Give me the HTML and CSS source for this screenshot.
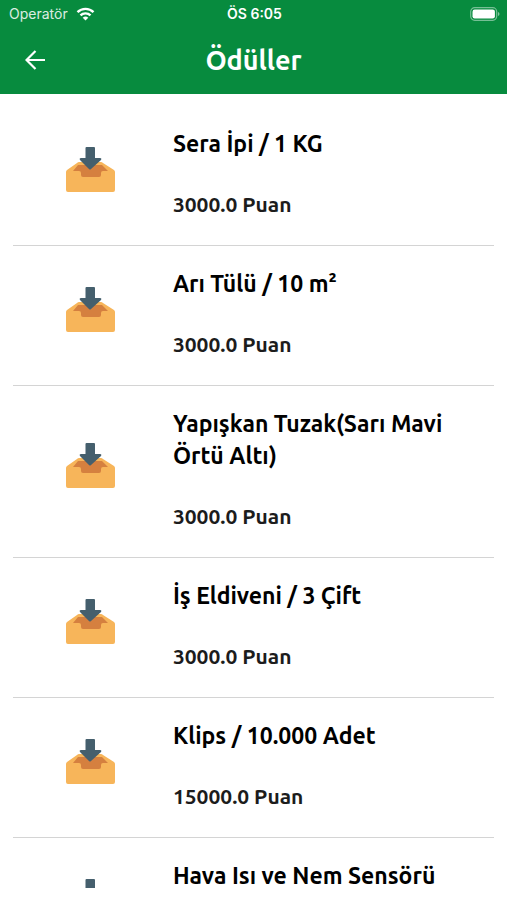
FILE: index.html
```
<!DOCTYPE html>
<html lang="tr">
<head>
  <meta charset="UTF-8" />
  <meta name="viewport" content="width=device-width, initial-scale=1" />
  <title>Ödüller</title>
  <link rel="stylesheet" href="styles.css">
</head>
<body>
  <svg class="sprite" aria-hidden="true">
    <symbol id="inbox" viewBox="0 0 50 46">
      <path d="M12 16q1-1 2-1h22q1 0 2 1l11 7q1 1 1 2v18q0 2-2 2H3q-2 0-2-2V25q0-1 1-2z" fill="#f7b55a" />
      <path d="M13 18h24l6 6h-5q-2 0-2 2v2q0 2-2 2H18q-2 0-2-2v-2q0-2-2-2H8z" fill="#d5803f" />
      <path d="M20.500 1q0-1 1-1h7.500q1 0 1 1v10h5q2 0 1 2L26 22q-1 1-2 0l-9-9q-1-2 1-2h4.500z" fill="#455f6d" />
    </symbol>
  </svg>
  <header class="header">
    <div class="status">
      <div class="carrier">
        <span>Operatör</span>
        <svg class="wifi" viewBox="0 0 18 14" fill="none" stroke="#fff" stroke-width="2.4">
          <path d="M1 5.2a11.4 11.4 0 0 1 16 0" />
          <path d="M4 8.4a7.1 7.1 0 0 1 10 0" />
          <path d="M9 13.6L6.2 10.8a4 4 0 0 1 5.6 0z" fill="#fff" stroke="none" />
        </svg>
      </div>
      <div class="time">ÖS 6:05</div>
      <svg class="battery" viewBox="0 0 30 14">
        <rect x="0.7" y="0.7" width="26" height="12.6" rx="4" fill="none" stroke="#fff" stroke-opacity=".45" stroke-width="1.2" />
        <rect x="2.5" y="2.5" width="22.4" height="9" rx="2.2" fill="#fff" />
        <path d="M28 5q1.5.6 1.5 2T28 9z" fill="#fff" fill-opacity=".5" />
      </svg>
    </div>
    <div class="navbar">
      <button class="back" aria-label="Geri">
        <svg viewBox="0 0 20 20" fill="none" stroke="#fff" stroke-width="2.2">
          <path d="M20 10H2M10.500 1L1.500 10l9 9" />
        </svg>
      </button>
      <h1>Ödüller</h1>
    </div>
  </header>
  <main class="list">
    <article class="reward">
      <div class="icon"><svg><use href="#inbox" /></svg></div>
      <div class="info"><h2>Sera İpi / 1 KG</h2><p>3000.0 Puan</p></div>
    </article>
    <article class="reward">
      <div class="icon"><svg><use href="#inbox" /></svg></div>
      <div class="info"><h2>Arı Tülü / 10 m²</h2><p>3000.0 Puan</p></div>
    </article>
    <article class="reward">
      <div class="icon"><svg><use href="#inbox" /></svg></div>
      <div class="info"><h2>Yapışkan Tuzak(Sarı Mavi Örtü Altı)</h2><p>3000.0 Puan</p></div>
    </article>
    <article class="reward">
      <div class="icon"><svg><use href="#inbox" /></svg></div>
      <div class="info"><h2>İş Eldiveni / 3 Çift</h2><p>3000.0 Puan</p></div>
    </article>
    <article class="reward">
      <div class="icon"><svg><use href="#inbox" /></svg></div>
      <div class="info"><h2>Klips / 10.000 Adet</h2><p>15000.0 Puan</p></div>
    </article>
    <article class="reward">
      <div class="icon"><svg><use href="#inbox" /></svg></div>
      <div class="info"><h2>Hava Isı ve Nem Sensörü</h2></div>
    </article>
  </main>
</body>
</html>
```
FILE: styles.css
```
* { box-sizing: border-box; }
body {
  margin: 0; height: 100vh; overflow: hidden;
  display: flex; flex-direction: column;
  background: #fff; color: #000;
  font-family: Ubuntu, "Noto Sans", sans-serif;
}
h1, h2, p { margin: 0; }
.sprite { display: none; }
.header {
  flex: none; background: #078b3e; color: #fff;
}
.status {
  display: grid; grid-template-columns: 1fr auto 1fr; align-items: center;
  height: 27px; padding: 0 7px 0 9px;
  font-family: Inter, sans-serif; font-size: 14px;
}
.carrier { display: flex; align-items: center; gap: 8px; }
.carrier span { opacity: 0.85; }
.wifi { width: 19px; height: 14px; }
.time { font-weight: 600; }
.battery { width: 30px; height: 14px; justify-self: end; }
.navbar {
  display: grid; grid-template-columns: 48px 1fr 48px; align-items: center;
  height: 67px; padding: 0 11px 2px;
}
.back {
  display: flex; align-items: center; justify-content: center;
  height: 48px; padding: 0; border: 0; background: none; cursor: pointer;
}
.back svg { width: 20px; height: 20px; }
h1 { font-size: 27px; line-height: 32px; font-weight: 700; text-align: center; }
.list {
  flex: 1; min-height: 0; overflow: hidden;
  margin-bottom: 12px; padding: 12px 13px 0;
}
.reward {
  display: flex; gap: 6px; min-height: 140px;
  border-bottom: 1px solid #d4d4d4;
}
.icon {
  flex: 0 0 32%; display: flex; align-items: center; justify-content: center;
  padding-bottom: 12px;
}
.icon svg { width: 50px; height: 46px; }
.info { flex: 1; padding: 22px 24px 25px 0; }
h2 { font-size: 23px; line-height: 32px; font-weight: 600; }
p {
  margin-top: 28px; font-size: 21px; line-height: 32px; font-weight: 600;
  color: #1c1c1c;
}
```
